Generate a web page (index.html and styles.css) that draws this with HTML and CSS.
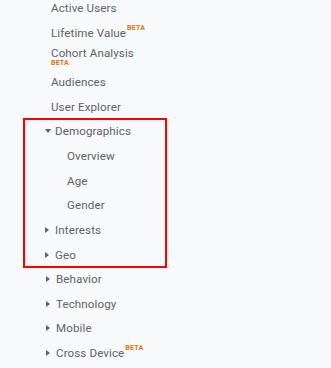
FILE: index.html
```html
<!DOCTYPE html>
<html lang="en">
<head>
    <meta charset="UTF-8">
    <title>Audience</title>
    <link rel="stylesheet" href="styles.css">
</head>
<body>

<div class="nav">
    <div class="nav-item">Active Users</div>
    <div class="nav-item">Lifetime Value<span class="beta">BETA</span></div>
    <div class="nav-item stacked">
        <span>Cohort Analysis</span>
        <span class="beta under">BETA</span>
    </div>
    <div class="nav-item">Audiences</div>
    <div class="nav-item">User Explorer</div>

    <!-- highlighted group -->
    <div class="highlight">
        <div class="nav-item folder open"><span class="caret down"></span>Demographics</div>
        <div class="nav-item sub">Overview</div>
        <div class="nav-item sub">Age</div>
        <div class="nav-item sub">Gender</div>
        <div class="nav-item folder"><span class="caret"></span>Interests</div>
        <div class="nav-item folder"><span class="caret"></span>Geo</div>
    </div>

    <div class="nav-item folder"><span class="caret"></span>Behavior</div>
    <div class="nav-item folder"><span class="caret"></span>Technology</div>
    <div class="nav-item folder"><span class="caret"></span>Mobile</div>
    <div class="nav-item folder"><span class="caret"></span>Cross Device<span class="beta">BETA</span></div>
</div>

</body>
</html>
```

FILE: styles.css
```css
body {
    margin: 0;
    padding: 0;
    background-color: #f8f9fa;
    font-family: Roboto, "Noto Sans", sans-serif;
    color: #5f6368;
}
.nav {
    margin-top: -4px;
}
.nav-item {
    display: flex;
    align-items: center;
    height: 24.64px;
    padding-left: 51px;
    font-size: 11.6px;
    letter-spacing: 0.1px;
    white-space: nowrap;
}
.nav-item.stacked {
    flex-direction: column;
    align-items: flex-start;
    justify-content: center;
    line-height: 12px;
}
.beta {
    align-self: flex-start;
    margin-top: 3px;
    margin-left: 1px;
    font-size: 7px;
    font-weight: 700;
    letter-spacing: 0.2px;
    color: #e8710a;
}
.beta.under {
    margin: 0;
    line-height: 9px;
}
.highlight {
    margin-left: 24px;
    width: 142px;
    outline: 2px solid #f00;
    outline-offset: -1px;
}
.highlight .nav-item {
    padding-left: 21px;
}
.nav-item.folder {
    padding-left: 46px;
}
.highlight .nav-item.folder {
    padding-left: 21px;
}
.highlight .nav-item.sub {
    padding-left: 43px;
}
.caret {
    width: 0;
    height: 0;
    margin-right: 6px;
    border-top: 3px solid transparent;
    border-bottom: 3px solid transparent;
    border-left: 4px solid #5f6368;
}
.caret.down {
    margin-right: 4px;
    border-left: 3px solid transparent;
    border-right: 3px solid transparent;
    border-top: 4px solid #5f6368;
    border-bottom: 0;
}
```
